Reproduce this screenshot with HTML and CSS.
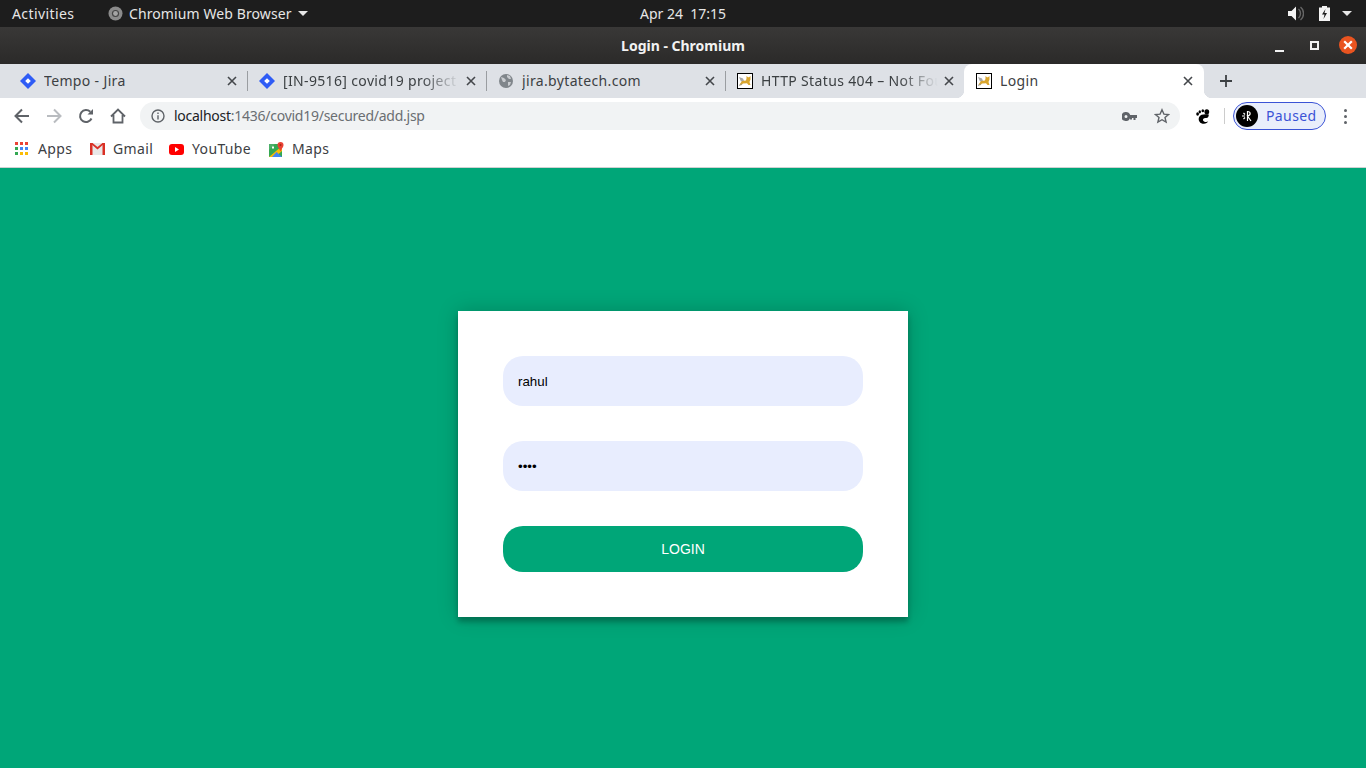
FILE: index.html
```html
<!DOCTYPE html>
<html lang="en">
<head>
  <meta charset="UTF-8">
  <title>Login - Chromium</title>
  <link rel="stylesheet" href="styles.css">
</head>
<body>

  <svg class="defs" width="0" height="0">
    <symbol id="jira" viewBox="0 0 16 16">
      <path d="M8 0l8 8-8 8-8-8z" fill="#2f5cf5"/>
      <path d="M8 5.200L10.800 8 8 10.800 5.200 8z" fill="#fff"/>
    </symbol>
    <symbol id="tomcat" viewBox="0 0 16 16">
      <rect x=".5" y=".5" width="15" height="15" fill="#fff" stroke="#000"/>
      <path d="M2 4l4 1.500 1 2.500-3 .5z" fill="#a8a8a8"/>
      <path d="M2.500 11.500L5 8l4-.5 .5-2L9.500 3l1.500 1.200h1L13.500 3v3.500L12.500 9l1 3h-2L10 10.200 6 10.500 4 12.500z" fill="#d9a52e"/>
      <path d="M2 12.500l3-1.500" stroke="#999" stroke-width=".9" fill="none"/>
    </symbol>
    <symbol id="close" viewBox="0 0 10 10">
      <path d="M1 1l8 8M9 1l-8 8" stroke="#44474b" stroke-width="1.600" fill="none"/>
    </symbol>
  </svg>

  <div class="topbar">
    <div class="topbar-left">
      <span class="activities">Activities</span>
      <span class="app-menu">
        <svg width="15" height="15" viewBox="0 0 15 15"><circle cx="7.500" cy="7.500" r="7" fill="#8b8b8b"/><circle cx="7.500" cy="7.500" r="3.600" fill="#444"/><circle cx="7.500" cy="7.500" r="2.400" fill="#a5a5a5"/></svg>
        Chromium Web Browser
        <span class="caret"></span>
      </span>
    </div>
    <div class="clock">Apr 24&nbsp; 17:15</div>
    <div class="topbar-right">
      <svg class="tray-speaker" width="16" height="15" viewBox="0 0 16 15"><path d="M0 5h3.500L8 .5v14L3.500 10H0z" fill="#f2f2f2"/><path d="M10.500 3a6 6 0 0 1 0 9M12.500 1a8.500 8.500 0 0 1 0 13" stroke="#666" stroke-width="1.400" fill="none"/></svg>
      <svg width="11" height="15" viewBox="0 0 11 15"><path d="M3 0h5v1.500h3V15H0V1.500h3z" fill="#f4f4f4"/><path d="M6.500 3L3 8.500h2.500l-1 4.500L8 7H5.500z" fill="#1d1d1d"/></svg>
      <span class="caret caret-big"></span>
    </div>
  </div>

  <div class="titlebar">
    <span class="window-title">Login - Chromium</span>
    <div class="window-buttons">
      <span class="win-min"></span>
      <span class="win-max"></span>
      <span class="win-close">
        <svg width="10" height="10" viewBox="0 0 10 10"><path d="M1.200 1.200l7.600 7.600M8.800 1.200L1.200 8.800" stroke="#fff" stroke-width="2.200" fill="none"/></svg>
      </span>
    </div>
  </div>

  <div class="tabstrip">
    <div class="tab">
      <svg class="favicon" width="16" height="16"><use href="#jira"/></svg>
      <span class="tab-title">Tempo - Jira</span>
      <svg class="tab-close" width="10" height="10"><use href="#close"/></svg>
    </div>
    <div class="tab">
      <svg class="favicon" width="16" height="16"><use href="#jira"/></svg>
      <span class="tab-title fade">[IN-9516] covid19 project -</span>
      <svg class="tab-close" width="10" height="10"><use href="#close"/></svg>
    </div>
    <div class="tab">
      <svg class="favicon" width="16" height="16" viewBox="0 0 16 16"><circle cx="8" cy="8" r="7" fill="#80868b"/><path d="M3 4l3 1 2 2-1 2-2 0-1-2zM9 2l3 1 1 3-2 0-2-2zM10 9l3 0-1 3-2 1z" fill="#c9ccd0"/></svg>
      <span class="tab-title">jira.bytatech.com</span>
      <svg class="tab-close" width="10" height="10"><use href="#close"/></svg>
    </div>
    <div class="tab tab-last">
      <svg class="favicon" width="16" height="16"><use href="#tomcat"/></svg>
      <span class="tab-title fade">HTTP Status 404 – Not Fou</span>
      <svg class="tab-close" width="10" height="10"><use href="#close"/></svg>
    </div>
    <div class="tab tab-active">
      <svg class="favicon" width="16" height="16"><use href="#tomcat"/></svg>
      <span class="tab-title">Login</span>
      <svg class="tab-close" width="10" height="10"><use href="#close"/></svg>
    </div>
    <svg class="new-tab" width="12" height="12" viewBox="0 0 12 12"><path d="M6 0v12M0 6h12" stroke="#3c4043" stroke-width="1.800"/></svg>
  </div>

  <div class="toolbar">
    <div class="nav-buttons">
      <svg width="16" height="16" viewBox="0 0 16 16"><path d="M15 8H2M8 1.500L1.500 8 8 14.500" stroke="#5f6368" stroke-width="2" fill="none"/></svg>
      <svg width="16" height="16" viewBox="0 0 16 16"><path d="M1 8h13M8 1.500L14.500 8 8 14.500" stroke="#b9bcc0" stroke-width="2" fill="none"/></svg>
      <svg width="16" height="16" viewBox="0 0 16 16"><path d="M13.500 10.500A6 6 0 1 1 12.300 3.800" stroke="#5f6368" stroke-width="2" fill="none"/><path d="M9.500 6.500H15V1z" fill="#5f6368"/></svg>
      <svg width="16" height="16" viewBox="0 0 16 16"><path d="M1 8.500L8 1.500l7 7M3.500 7v7.500h9V7" stroke="#5f6368" stroke-width="1.800" fill="none"/></svg>
    </div>
    <div class="omnibox">
      <svg width="14" height="14" viewBox="0 0 14 14"><circle cx="7" cy="7" r="6" stroke="#5f6368" stroke-width="1.400" fill="none"/><path d="M7 6.200V10.500M7 3.500v1.500" stroke="#5f6368" stroke-width="1.400"/></svg>
      <span class="url"><span class="url-host">localhost</span>:1436/covid19/secured/add.jsp</span>
      <svg class="omni-key" width="15" height="9" viewBox="0 0 15 9"><path fill-rule="evenodd" d="M4 0a4.500 4.500 0 0 1 4.200 3H15v3h-1.500v2h-2V6H10v1.500H8V6.200A4.500 4.500 0 1 1 4 0zm0 3a1.500 1.500 0 1 0 0 3 1.500 1.500 0 0 0 0-3z" fill="#5f6368"/></svg>
      <svg class="omni-star" width="16" height="16" viewBox="0 0 16 16"><path d="M8 1.800l1.900 4.300 4.600.4-3.500 3 1.100 4.600L8 11.700l-4.100 2.400L5 9.500l-3.500-3 4.600-.4z" stroke="#5f6368" stroke-width="1.400" fill="none"/></svg>
    </div>
    <svg class="ext-gnome" width="14" height="15" viewBox="0 0 14 15"><ellipse cx="1.600" cy="5" rx="1.400" ry="1.700"/><ellipse cx="3.800" cy="2.800" rx="1.200" ry="1.600"/><ellipse cx="6.800" cy="1.800" rx="1.300" ry="1.500"/><ellipse cx="10.800" cy="2.800" rx="2.400" ry="2.600"/><path d="M12.800 5.500C9 5 4.500 5 3 8.200 1.800 11.500 4 14.800 8 14.800c2 0 3.500-1 4.200-2.200-2.200.8-4.700.4-5.200-1.400-.3-1.500 1-2.600 3-2.200 2 .2 2.800-1.500 2.800-3.500z"/></svg>
    <span class="toolbar-sep"></span>
    <div class="profile">
      <span class="avatar">
        <svg width="12" height="12" viewBox="0 0 12 12"><path d="M6.500 1v10M6.500 1.500c3.500 0 3.500 4 0 4.500l3.500 5M1 6h3M2.500 3l1.500 1.500M2.500 9L4 7.500" stroke="#fff" stroke-width="1.200" fill="none"/></svg>
      </span>
      <span class="profile-text">Paused</span>
    </div>
    <div class="menu-dots"><span></span><span></span><span></span></div>
  </div>

  <div class="bookmarks">
    <span class="bookmark bookmark-apps">
      <svg width="14" height="14" viewBox="0 0 14 14">
        <rect width="3" height="3" fill="#ea4335"/><rect x="5" width="3" height="3" fill="#ea4335"/><rect x="10" width="3" height="3" fill="#ea4335"/>
        <rect y="5" width="3" height="3" fill="#34a853"/><rect x="5" y="5" width="3" height="3" fill="#4285f4"/><rect x="10" y="5" width="3" height="3" fill="#4285f4"/>
        <rect y="10" width="3" height="3" fill="#34a853"/><rect x="5" y="10" width="3" height="3" fill="#fbbc05"/><rect x="10" y="10" width="3" height="3" fill="#fbbc05"/>
      </svg>
      <span class="bookmark-label">Apps</span>
    </span>
    <span class="bookmark bookmark-gmail">
      <svg width="15" height="12" viewBox="0 0 15 12"><rect width="15" height="12" fill="#e8e8e8"/><path d="M0 0h2.500L7.500 4 12.500 0H15L7.500 6.500z" fill="#d93025"/><rect width="2.500" height="12" fill="#d93025"/><rect x="12.500" width="2.500" height="12" fill="#d93025"/></svg>
      <span class="bookmark-label">Gmail</span>
    </span>
    <span class="bookmark bookmark-youtube">
      <svg width="15" height="11" viewBox="0 0 15 11"><rect width="15" height="11" rx="3" fill="#f00"/><path d="M6 3l4 2.500L6 8z" fill="#fff"/></svg>
      <span class="bookmark-label">YouTube</span>
    </span>
    <span class="bookmark">
      <svg width="15" height="15" viewBox="0 0 15 15"><rect y="2" width="13" height="13" fill="#34a853"/><path d="M0 15L13 4v5L6 15z" fill="#fbbc05"/><path d="M0 2h6L0 8z" fill="#4db06a"/><path d="M3 4.500h2v2H3z" fill="#fff"/><path d="M3 15l4.500-5 5.500 5z" fill="#4285f4"/><circle cx="11.500" cy="3" r="3" fill="#ea4335"/><path d="M9 4.500l2.500 5 2.500-5z" fill="#ea4335"/><circle cx="11.500" cy="3" r="1" fill="#a52714"/></svg>
      <span class="bookmark-label">Maps</span>
    </span>
  </div>

  <main class="login-page">
    <form class="login-form">
      <input class="login-input" type="text" value="rahul">
      <input class="login-input" type="password" value="1234">
      <button class="login-btn" type="button">LOGIN</button>
    </form>
  </main>

</body>
</html>
```

FILE: styles.css
```css
* { box-sizing: border-box; }
html, body {
  margin: 0;
  height: 768px;
  overflow: hidden;
}
body {
  font-family: "Noto Sans", sans-serif;
  font-size: 14px;
  background: #00a678;
}
.defs { position: absolute; }
svg { display: block; flex: none; }

/* gnome top bar */
.topbar {
  height: 27px;
  background: #1d1d1d;
  color: #e6e6e6;
  display: grid;
  grid-template-columns: 1fr auto 1fr;
  align-items: center;
  padding: 0 14px;
}
.topbar-left { display: flex; align-items: center; }
.activities {
  width: 96px;
  margin-left: -2px;
  letter-spacing: 0.4px;
}
.app-menu {
  display: flex;
  align-items: center;
  gap: 6px;
  letter-spacing: 0.1px;
}
.caret {
  width: 0;
  height: 0;
  border-left: 5px solid transparent;
  border-right: 5px solid transparent;
  border-top: 5px solid #e6e6e6;
}
.topbar-right {
  display: flex;
  align-items: center;
  justify-content: flex-end;
  gap: 12px;
}
.tray-speaker { margin-right: 3px; }
.caret-big { border-left-width: 5.5px; border-right-width: 5.5px; }

/* window title */
.titlebar {
  position: relative;
  height: 37px;
  background: linear-gradient(#393837, #2b2a29);
  color: #f2f2f2;
  display: flex;
  align-items: center;
  justify-content: center;
}
.window-title { font-weight: 700; font-size: 14px; }
.window-buttons {
  position: absolute;
  right: 9px;
  top: 9px;
  display: flex;
  align-items: center;
}
.win-min {
  width: 9px;
  height: 2px;
  margin-top: 12px;
  background: #f2f2f2;
}
.win-max {
  width: 9px;
  height: 9px;
  margin: 0 20px 0 26px;
  border: 2.5px solid #f2f2f2;
}
.win-close {
  width: 18px;
  height: 18px;
  border-radius: 50%;
  background: #e95420;
  display: flex;
  align-items: center;
  justify-content: center;
}

/* tabs */
.tabstrip {
  height: 34px;
  background: #dee1e6;
  display: flex;
  align-items: center;
  padding-left: 8px;
  color: #3c4043;
}
.tab {
  position: relative;
  width: 239px;
  height: 34px;
  display: flex;
  align-items: center;
  padding: 0 10px 0 12px;
}
.tab::after {
  content: "";
  position: absolute;
  right: -1px;
  top: 7px;
  width: 1px;
  height: 20px;
  background: #9a9da1;
}
.tab-last::after { display: none; }
.tab-title {
  flex: 1;
  margin-left: 8px;
  padding-bottom: 2px;
  white-space: nowrap;
  overflow: hidden;
  letter-spacing: 0.35px;
}
.fade {
  -webkit-mask-image: linear-gradient(to right, #000 78%, transparent 100%);
  mask-image: linear-gradient(to right, #000 78%, transparent 100%);
}
.tab-close { margin-left: 6px; }
.tab-active {
  width: 240px;
  padding-right: 11px;
  background: #fff;
  border-radius: 8px 8px 0 0;
}
.tab-active::before,
.tab-active::after {
  content: "";
  display: block;
  position: absolute;
  bottom: 0;
  top: auto;
  width: 8px;
  height: 8px;
}
.tab-active::before {
  left: -8px;
  background: radial-gradient(circle at 0 0, transparent 8px, #fff 8.5px);
}
.tab-active::after {
  right: -8px;
  background: radial-gradient(circle at 100% 0, transparent 8px, #fff 8.5px);
}
.new-tab { margin-left: 16px; }

/* toolbar */
.toolbar {
  height: 36px;
  background: #fff;
  display: flex;
  align-items: center;
  padding-left: 14px;
}
.nav-buttons {
  display: flex;
  align-items: center;
  gap: 16px;
  width: 126px;
}
.omnibox {
  width: 1040px;
  height: 28px;
  border-radius: 14px;
  background: #f1f3f4;
  display: flex;
  align-items: center;
  padding: 0 10px 0 11px;
  color: #6a6e72;
}
.url {
  margin-left: 9px;
  padding-bottom: 2px;
  flex: 1;
  letter-spacing: -0.26px;
}
.url-host { color: #202124; }
.omni-star { margin-left: 17px; }
.ext-gnome { margin-left: 16px; }
.toolbar-sep {
  width: 1px;
  height: 16px;
  margin: 0 8px 0 14px;
  background: #ccc;
}
.profile {
  width: 93px;
  height: 28px;
  border: 1px solid #3b53d6;
  border-radius: 14px;
  background: #e9eefb;
  display: flex;
  align-items: center;
  padding-left: 2px;
  color: #3b53d6;
}
.avatar {
  width: 22px;
  height: 22px;
  border-radius: 50%;
  background: #000;
  display: flex;
  align-items: center;
  justify-content: center;
}
.profile-text {
  margin-left: 8px;
  padding-bottom: 2px;
  letter-spacing: 0.4px;
}
.menu-dots {
  margin-left: 18px;
  display: flex;
  flex-direction: column;
  gap: 3px;
}
.menu-dots span {
  width: 3px;
  height: 3px;
  border-radius: 50%;
  background: #5f6368;
}

/* bookmarks */
.bookmarks {
  height: 34px;
  background: #fff;
  border-bottom: 1px solid #cfd1d2;
  display: flex;
  align-items: center;
  padding-left: 15px;
  color: #3c4043;
}
.bookmark { display: flex; align-items: center; gap: 9px; }
.bookmark svg { margin-bottom: 3px; }
.bookmark-label { padding-bottom: 4px; letter-spacing: 0.35px; }
.bookmark-apps { width: 75px; }
.bookmark-gmail { width: 79px; }
.bookmark-gmail .bookmark-label { margin-left: -1px; }
.bookmark-youtube { width: 100px; }
.bookmark-youtube .bookmark-label,
.bookmark:last-child .bookmark-label { margin-left: -1px; }

/* login page */
.login-page { padding-top: 143px; }
.login-form {
  width: 450px;
  margin: 0 auto;
  padding: 45px;
  background: #fff;
  box-shadow: 0 0 20px rgba(0, 0, 0, 0.2), 0 5px 5px rgba(0, 0, 0, 0.24);
  display: flex;
  flex-direction: column;
  gap: 35px;
}
.login-input {
  width: 360px;
  height: 50px;
  padding: 15px;
  border: 0;
  border-radius: 20px;
  outline: none;
  background: #e8edfe;
  font-family: "Liberation Sans", sans-serif;
  font-size: 13.33px;
  color: #000;
}
.login-btn {
  width: 360px;
  height: 46px;
  border: 0;
  border-radius: 20px;
  background: #00a678;
  color: #fff;
  font-family: "Liberation Sans", sans-serif;
  font-size: 14px;
}
```
